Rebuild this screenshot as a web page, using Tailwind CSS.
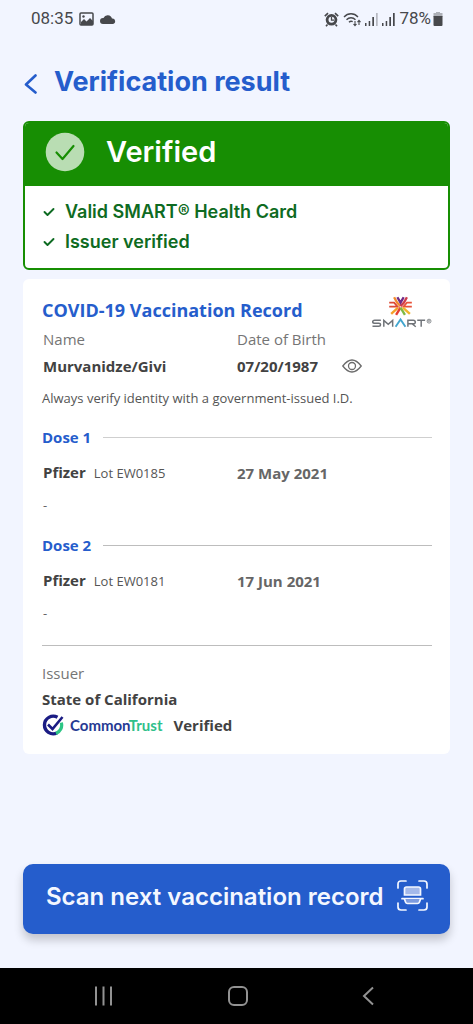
<!DOCTYPE html>
<html lang="en">
<head>
<meta charset="utf-8">
<meta name="viewport" content="width=device-width, initial-scale=1">
<title>Verification result</title>
<script src="https://cdn.jsdelivr.net/npm/@tailwindcss/browser@4"></script>
</head>
<body class="flex min-h-screen flex-col bg-[#f2f5ff] font-['Open_Sans',sans-serif] text-[#424242]">

<!-- Status bar -->
<div class="flex h-[38px] items-center justify-between pr-[30px] pl-[31px] font-['Roboto',sans-serif] text-[17px] text-[#47484c]">
  <div class="flex items-center gap-[6px]">
    <span>08:35</span>
    <svg class="h-[14px] w-[15px]" viewBox="0 0 15 14" fill="none"><rect x="1" y="1" width="13" height="12" rx="1" stroke="currentColor" stroke-width="1.500"/><path d="M2 12V10l3-3 2.500 2.500L11 6l3 3v4H2Z" fill="currentColor"/><circle cx="4.500" cy="4.500" r="1.200" fill="currentColor"/></svg>
    <svg class="h-[10px] w-4" viewBox="0 0 16 10" fill="currentColor"><path d="M3 10a3 3 0 0 1 0-6h.5A4.500 4.500 0 0 1 12 4.500 2.800 2.800 0 0 1 13 10Z"/></svg>
  </div>
  <div class="flex items-center gap-1">
    <svg class="h-[15px] w-[15px]" viewBox="0 0 15 15" fill="none"><circle cx="7.500" cy="7.800" r="5.800" fill="currentColor"/><path d="M.8 4.200 4 1.200M14.200 4.200 11 1.200M3.500 12.500 2 14.300M11.500 12.500 13 14.300" stroke="currentColor" stroke-width="1.600"/><circle cx="7.500" cy="7.800" r="3" fill="#f2f5ff"/><path d="M7.500 5v3.200H10" stroke="currentColor" stroke-width="1.300"/></svg>
    <svg class="h-[15px] w-[18px]" viewBox="0 0 18 15" fill="none" stroke="currentColor"><path d="M1 5c4-4.300 10-4.300 14 0M3.500 7.700c2.600-2.600 6.400-2.600 9 0M6 10.200c1.200-1.200 2.500-1.200 3.700-.6" stroke-width="1.400"/><path d="M12 9v4.500m-1.500-1.500 1.500 1.700 1.500-1.700M16 13V8.500m-1.500 1.600L16 8.400l1.500 1.700" stroke-width="1.100"/></svg>
    <svg class="h-[13px] w-[13px]" viewBox="0 0 13 13" fill="currentColor"><path d="M0 10h1.500v3H0zM3.700 8h1.500v5H3.700zM7.300 4h1.700v9H7.300z"/><path opacity=".35" d="M11 0h1.700v13H11z"/></svg>
    <svg class="h-[13px] w-[13px]" viewBox="0 0 13 13" fill="currentColor"><path d="M0 10h1.500v3H0zM3.700 8h1.500v5H3.700zM7.300 4h1.700v9H7.300zM11 0h1.700v13H11z"/></svg>
    <div class="flex items-center gap-[2px]">
      <span>78%</span>
      <svg class="h-[14px] w-[10px]" viewBox="0 0 10 14" fill="currentColor"><path opacity=".4" d="M3 0h4v1h2.500v4H.5V1H3Z"/><path d="M.5 4h9v9a1 1 0 0 1-1 1h-7a1 1 0 0 1-1-1Z"/></svg>
    </div>
  </div>
</div>

<!-- Title -->
<header class="flex h-[83px] items-center gap-4 pb-[2px] pt-[6px] pl-6 text-[#255dcc]">
  <button type="button" aria-label="Back" class="mt-1 block h-5 w-[14px]">
    <svg class="h-5 w-[14px]" viewBox="0 0 14 20" fill="none" stroke="currentColor" stroke-width="2.600" stroke-linecap="round" stroke-linejoin="round"><path d="M11.500 1.500 2 10.500l9.500 8"/></svg>
  </button>
  <h1 class="font-['Inter',sans-serif] text-[27px] leading-8 font-bold whitespace-nowrap">Verification result</h1>
</header>

<main class="flex grow flex-col px-[23px] pb-[34px]">
  <!-- Result -->
  <section class="overflow-hidden rounded-md border-2 border-[#178e03] bg-white font-['Inter',sans-serif] font-semibold">
    <div class="flex h-[63px] items-center gap-[21px] bg-[#178e03] pb-[6px] pl-5 text-white">
      <svg class="h-10 w-10" viewBox="0 0 40 40" fill="none"><circle cx="20" cy="20" r="19.300" fill="#b9ddb3"/><path d="m11.500 20.500 6 6.500L28.500 14" stroke="#178e03" stroke-width="2.200" stroke-linecap="round" stroke-linejoin="round"/></svg>
      <h2 class="text-[29px] leading-9">Verified</h2>
    </div>
    <ul class="py-[11px] pl-[18px] text-[18px] leading-[30px] text-[#0e6b22]">
      <li class="flex items-center gap-[10px]">
        <svg class="h-3 w-3" viewBox="0 0 12 12" fill="none" stroke="currentColor" stroke-width="1.900" stroke-linecap="round" stroke-linejoin="round"><path d="m1.500 6 3 3 6-6"/></svg>
        <span class="whitespace-nowrap">Valid SMART® Health Card</span>
      </li>
      <li class="flex items-center gap-[10px]">
        <svg class="h-3 w-3" viewBox="0 0 12 12" fill="none" stroke="currentColor" stroke-width="1.900" stroke-linecap="round" stroke-linejoin="round"><path d="m1.500 6 3 3 6-6"/></svg>
        <span>Issuer verified</span>
      </li>
    </ul>
  </section>

  <!-- Record -->
  <section class="mt-[9px] rounded-md bg-white pt-4 pr-[18px] pb-[18px] pl-[19px]">
    <div class="flex h-[35px] items-start justify-between">
      <h2 class="text-[18px] leading-[30px] font-bold whitespace-nowrap text-[#255dcc]">COVID-19 Vaccination Record</h2>
      <svg class="h-[34px] w-[60px] shrink-0" viewBox="0 0 61 34" role="img" aria-label="SMART" fill="none">
        <g stroke-width="2.400">
          <path d="m22.500 2 3 5.500 3.500 3.500" stroke="#f28a2e"/>
          <path d="m35.500 2-3 5.500L29 11" stroke="#cf3d4a"/>
          <path d="m25.800 2 3.200 5.500L32.200 2" stroke="#6f2a86"/>
          <path d="M17.500 7.500h5l3.500 4h-8.500" stroke="#dc4a35" stroke-width="1.800"/>
          <path d="M40.500 7.500h-5l-3.500 4h8.500" stroke="#e8533a" stroke-width="1.800"/>
          <path d="m26.500 12.500-7 6.500" stroke="#f5a028"/>
          <path d="M29 12.500 24.500 20" stroke="#e53d31"/>
          <path d="m29 12.500 4.500 7.500" stroke="#7fb942"/>
          <path d="m31.500 12.500 7 6.500" stroke="#f0b52c"/>
        </g>
        <g stroke="#6f7378" stroke-width="1.500">
          <path d="M9 25.500H2.700q-2 0-2 1.500t2 1.500H7q1.700 0 1.700 1.500T7 31.500H.5M12 32v-6.500l4.500 4 4.500-4V32M36.500 32v-6.500h5.500q2 0 2 1.800T42 29h-5m4 .2 3.500 2.800M46 25.500h8M50 25.500V32"/>
          <circle cx="58" cy="26.300" r="2" stroke-width=".8"/><path d="M57.300 27.300v-2h1.200v1h-1m.5 0 .7 1" stroke-width=".5"/>
        </g>
        <path d="m24 32 5-7.500 5 7.500" stroke="#42a6cf" stroke-width="1.900"/>
      </svg>
    </div>

    <dl class="grid grid-cols-2 text-[15px]">
      <div class="pl-px">
        <dt class="leading-[18px] text-[#757575]">Name</dt>
        <dd class="pt-2 leading-5 font-bold">Murvanidze/Givi</dd>
      </div>
      <div>
        <dt class="leading-[18px] text-[#757575]">Date of Birth</dt>
        <dd class="flex items-center gap-6 pt-2 leading-5 font-bold">
          <span>07/20/1987</span>
          <button type="button" aria-label="Hide date of birth" class="block">
            <svg class="h-[14px] w-5" viewBox="0 0 20 14" fill="none" stroke="#6b6b6b" stroke-width="1.300"><path d="M.8 7Q10-5 19.200 7 10 19 .8 7Z"/><circle cx="10" cy="7" r="3.500"/></svg>
          </button>
        </dd>
      </div>
    </dl>
    <p class="pt-3 text-[13px] leading-5 whitespace-nowrap text-[#555]">Always verify identity with a government-issued I.D.</p>

    <section>
      <div class="mt-[19px] flex items-center gap-3">
        <h3 class="text-[15px] leading-5 font-bold text-[#255dcc]">Dose 1</h3>
        <div class="h-px grow bg-[#cfcfcf]"></div>
      </div>
      <div class="grid grid-cols-2 items-center pt-[15px] leading-5">
        <div class="flex items-baseline gap-2 pl-px"><span class="text-[15px] font-bold">Pfizer</span><span class="text-[13px] text-[#555]">Lot EW0185</span></div>
        <time datetime="2021-05-27" class="text-[15px] font-bold text-[#666]">27 May 2021</time>
      </div>
      <p class="pt-3 pl-px text-[13px] leading-5 text-[#666]">-</p>
    </section>

    <section>
      <div class="mt-5 flex items-center gap-3">
        <h3 class="text-[15px] leading-5 font-bold text-[#255dcc]">Dose 2</h3>
        <div class="h-px grow bg-[#bdbdbd]"></div>
      </div>
      <div class="grid grid-cols-2 items-center pt-[15px] leading-5">
        <div class="flex items-baseline gap-2 pl-px"><span class="text-[15px] font-bold">Pfizer</span><span class="text-[13px] text-[#555]">Lot EW0181</span></div>
        <time datetime="2021-06-17" class="text-[15px] font-bold text-[#666]">17 Jun 2021</time>
      </div>
      <p class="pt-3 pl-px text-[13px] leading-5 text-[#666]">-</p>
    </section>

    <hr class="mt-[22px] border-[#bdbdbd]">

    <section class="pt-[17px] text-[15px]">
      <h3 class="leading-5 text-[#757575]">Issuer</h3>
      <p class="pt-[6px] leading-5 font-bold">State of California</p>
      <div class="flex items-center pt-[5px] leading-[22px]">
        <svg class="h-[22px] w-[22px]" viewBox="0 0 22 22" fill="none"><path d="M15.500 3.300A8.800 8.800 0 1 0 15 19" stroke="#1b1c84" stroke-width="3.400"/><path d="M14 19.400a8.800 8.800 0 0 0 5.300-10.800" stroke="#2cc585" stroke-width="3.200"/><path d="m6 10.500 4.500 4.500L20.500 3" stroke="#1b1c84" stroke-width="2.600"/></svg>
        <span class="ml-[6px] font-['Lato',sans-serif] text-[15px] font-bold text-[#263a93]">Common<span class="text-[#2fc08a]">Trust</span></span>
        <span class="ml-[11px] font-bold">Verified</span>
      </div>
    </section>
  </section>

  <button type="button" class="mt-auto flex h-[70px] w-full items-center justify-between rounded-[10px] bg-[#255dcc] pr-[22px] pl-[23px] text-[#f4f7ff] shadow-[0_6px_10px_#00000033]">
    <span class="pb-1 font-['Inter',sans-serif] text-[24px] leading-8 font-semibold whitespace-nowrap">Scan next vaccination record</span>
    <svg class="mb-[8px] h-[31px] w-[31px] shrink-0" viewBox="0 0 31 31" fill="none" stroke="currentColor" stroke-width="1.700" stroke-linecap="round"><path d="M1 8V4q0-3 3-3h5M22 1h5q3 0 3 3v4M1 23v4q0 3 3 3h5M22 30h5q3 0 3-3v-4"/><path d="M7.500 15V9q0-2 2-2h12q2 0 2 2v6Z" fill="#a4b9ea"/><path d="M5 18.700h21"/><path d="m7.500 19 1 3q.5 1.500 2 1.500h10q1.500 0 2-1.500l1-3" fill="#7d9bdf"/></svg>
  </button>
</main>

<!-- System navigation -->
<nav aria-label="System" class="flex h-14 items-center justify-between bg-black pr-[99px] pl-[94px]">
  <button type="button" aria-label="Recent apps" class="block"><svg class="h-5 w-[19px]" viewBox="0 0 19 20" stroke="#929292" stroke-width="2"><path d="M2 .5v19M9.500.5v19M17 .5v19"/></svg></button>
  <button type="button" aria-label="Home" class="block"><svg class="h-5 w-5" viewBox="0 0 20 20" fill="none" stroke="#929292" stroke-width="2"><rect x="1" y="1" width="18" height="18" rx="5"/></svg></button>
  <button type="button" aria-label="Back" class="block"><svg class="h-5 w-3" viewBox="0 0 12 20" fill="none" stroke="#929292" stroke-width="2"><path d="m11 1.500-9 8.500 9 8.500"/></svg></button>
</nav>
</body>
</html>
